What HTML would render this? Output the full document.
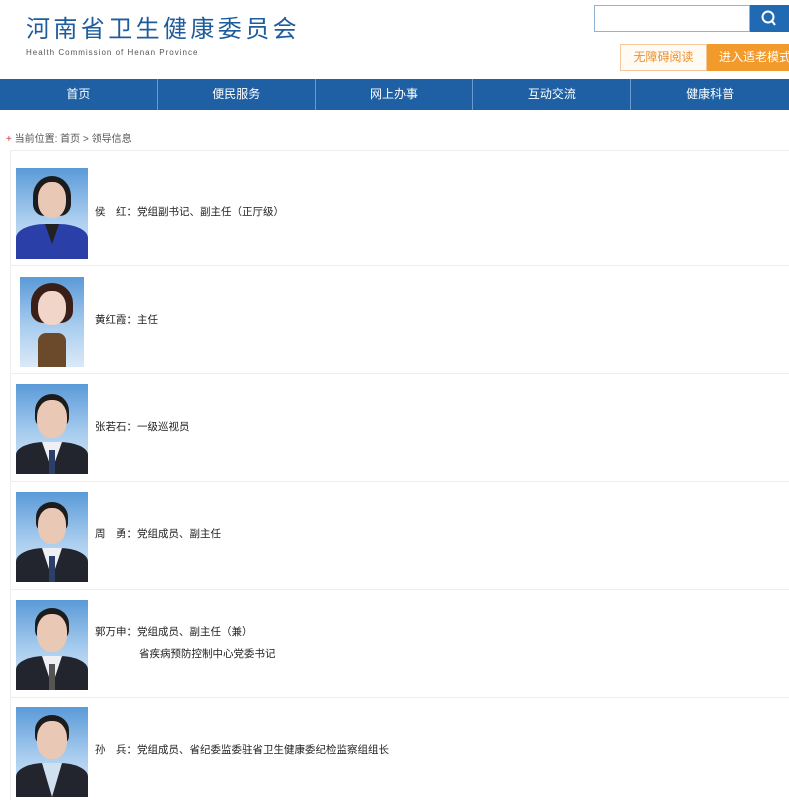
<!DOCTYPE html>
<html><head><meta charset="utf-8"><style>
*{margin:0;padding:0;box-sizing:border-box}
body{width:789px;height:800px;overflow:hidden;background:#fff;font-family:"Liberation Sans","Noto Sans CJK SC",sans-serif;position:relative;color:#333}
.abs{position:absolute}
.title{left:26px;top:15px;font-size:24px;line-height:30px;color:#1f5c9c;letter-spacing:3.4px;white-space:nowrap}
.sub{left:26px;top:48px;font-size:8px;color:#555;letter-spacing:1px;white-space:nowrap}
.search{left:594px;top:5px;width:156px;height:27px;border:1px solid #8fb3d6;background:#fff}
.sbtn{left:750px;top:5px;width:39px;height:27px;background:#1f6ab3;color:#fff}
.acc{left:620px;top:44px;width:87px;height:27px;border:1px solid #f3c89a;color:#e8912f;font-size:12px;text-align:center;line-height:25px;background:#fffaf4}
.old{left:707px;top:44px;width:82px;height:27px;background:#f39a2c;color:#fff;font-size:12px;line-height:27px;padding-left:12px;white-space:nowrap;overflow:hidden}
.nav{left:0;top:79px;width:789px;height:31px;background:#1e60a3;display:flex}
.nav div{width:163px;color:#fff;font-size:12px;text-align:center;line-height:31px;border-right:1px solid #6a9bcd}
.crumb{left:6px;top:130px;font-size:10px;color:#555}
.crumb b{color:#c33;font-weight:normal}
.wrap{left:10px;top:150px;width:779px;height:650px;border-left:1px solid #eee;border-top:1px solid #eee}
.line{left:10px;width:779px;height:1px;background:#eee}
.ph{position:absolute;overflow:hidden;background:linear-gradient(#5a9ad8,#a9cdef 55%,#dbe9f7)}
.ph .h{position:absolute;left:50%;transform:translateX(-50%);border-radius:45%;background:#e9c9b5}
.ph .hair{position:absolute;left:50%;transform:translateX(-50%);border-radius:50% 50% 30% 30%;background:#1c1c1c}
.ph .b{position:absolute;left:0;right:0;bottom:0;border-radius:40% 40% 0 0;background:#22252d}
.ph .s{position:absolute;left:50%;transform:translateX(-50%);background:#eef0f4;clip-path:polygon(0 0,100% 0,50% 100%)}
.ph .t{position:absolute;left:50%;transform:translateX(-50%);width:6px;background:#2c3e6a}
.tx{position:absolute;left:95px;font-size:10.5px;color:#222;white-space:nowrap}
</style></head><body>
<div class="abs title">河南省卫生健康委员会</div>
<div class="abs sub">Health Commission of Henan Province</div>
<div class="abs search"></div>
<div class="abs sbtn"><svg width="39" height="27"><circle cx="18" cy="12" r="5.5" fill="none" stroke="#fff" stroke-width="2"/><line x1="22" y1="16" x2="25" y2="20" stroke="#fff" stroke-width="2"/></svg></div>
<div class="abs acc">无障碍阅读</div>
<div class="abs old">进入适老模式</div>
<div class="abs nav"><div>首页</div><div>便民服务</div><div>网上办事</div><div>互动交流</div><div style="border:none">健康科普</div></div>
<div class="abs crumb"><b>+</b> 当前位置: 首页 &gt; 领导信息</div>
<div class="abs wrap"></div>
<div class="abs line" style="top:265px"></div>
<div class="abs line" style="top:373px"></div>
<div class="abs line" style="top:481px"></div>
<div class="abs line" style="top:589px"></div>
<div class="abs line" style="top:697px"></div>

<div class="ph" style="left:16px;top:168px;width:72px;height:91px">
<div class="hair" style="top:8px;width:38px;height:40px"></div><div class="h" style="top:14px;width:28px;height:36px"></div>
<div class="b" style="top:56px;background:#2b3fa8"></div><div class="s" style="top:56px;width:14px;height:20px;background:#222"></div></div>
<div class="tx" style="top:204px">侯　红：党组副书记、副主任（正厅级）</div>

<div class="ph" style="left:20px;top:277px;width:64px;height:90px">
<div class="hair" style="top:6px;width:42px;height:40px;background:#3a1f18"></div><div class="h" style="top:14px;width:28px;height:34px;background:#f0d5c8"></div>
<div class="b" style="top:56px;left:18px;right:18px;background:#6a4a2a;border-radius:8px 8px 0 0"></div></div>
<div class="tx" style="top:312px">黄红霞：主任</div>

<div class="ph" style="left:16px;top:384px;width:72px;height:90px">
<div class="hair" style="top:10px;width:34px;height:34px"></div><div class="h" style="top:16px;width:30px;height:38px"></div>
<div class="b" style="top:58px"></div><div class="s" style="top:58px;width:20px;height:28px"></div><div class="t" style="top:66px;height:24px"></div></div>
<div class="tx" style="top:419px">张若石：一级巡视员</div>

<div class="ph" style="left:16px;top:492px;width:72px;height:90px">
<div class="hair" style="top:10px;width:32px;height:30px"></div><div class="h" style="top:16px;width:28px;height:36px"></div>
<div class="b" style="top:56px"></div><div class="s" style="top:56px;width:20px;height:30px"></div><div class="t" style="top:64px;height:26px"></div></div>
<div class="tx" style="top:526px">周　勇：党组成员、副主任</div>

<div class="ph" style="left:16px;top:600px;width:72px;height:90px">
<div class="hair" style="top:8px;width:34px;height:32px"></div><div class="h" style="top:14px;width:30px;height:38px"></div>
<div class="b" style="top:56px"></div><div class="s" style="top:56px;width:20px;height:30px"></div><div class="t" style="top:64px;height:26px;background:#555"></div></div>
<div class="tx" style="top:624px">郭万申：党组成员、副主任（兼）</div>
<div class="tx" style="top:646px;left:139px">省疾病预防控制中心党委书记</div>

<div class="ph" style="left:16px;top:707px;width:72px;height:90px">
<div class="hair" style="top:8px;width:34px;height:30px"></div><div class="h" style="top:14px;width:30px;height:38px"></div>
<div class="b" style="top:56px"></div><div class="s" style="top:56px;width:20px;height:34px;background:#cfe0f0"></div></div>
<div class="tx" style="top:742px">孙　兵：党组成员、省纪委监委驻省卫生健康委纪检监察组组长</div>
</body></html>
